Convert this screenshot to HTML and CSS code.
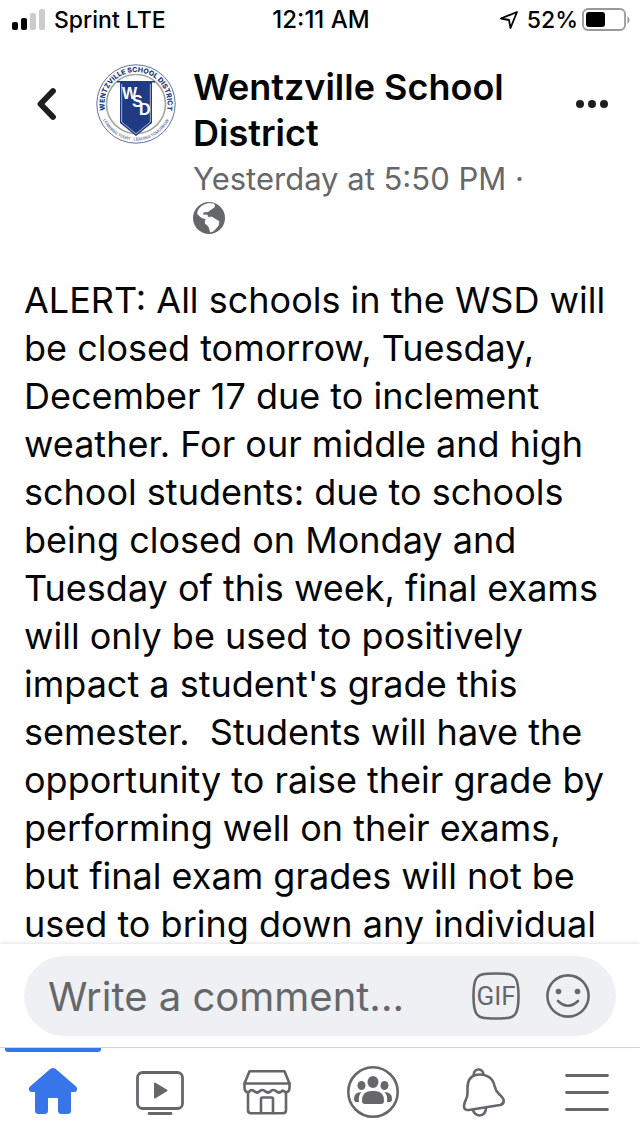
FILE: index.html
```html
<!DOCTYPE html>
<html lang="en">
<head>
<meta charset="utf-8">
<meta name="viewport" content="width=device-width, initial-scale=1">
<title>Wentzville School District</title>
<link rel="stylesheet" href="styles.css">
</head>
<body>
<div class="app">
  <div class="status">
    <div class="status-left">
      <svg width="34" height="22" viewBox="0 0 34 22" aria-hidden="true">
        <rect x="0" y="13" width="6" height="8" rx="2" fill="#000"/>
        <rect x="9" y="9" width="6" height="12" rx="2" fill="#000"/>
        <rect x="18" y="4" width="6" height="17" rx="2" fill="#ccc"/>
        <rect x="27" y="0" width="6" height="21" rx="2" fill="#ccc"/>
      </svg>
      <span>Sprint LTE</span>
    </div>
    <time class="status-time">12:11 AM</time>
    <div class="status-right">
      <svg class="location" width="20" height="20" viewBox="0 0 20 20" aria-hidden="true">
        <path d="M18 2 L2 8.500 L10 10 L11.500 18 Z" fill="none" stroke="#000" stroke-width="1.800" stroke-linejoin="round"/>
      </svg>
      <div class="battery-level">
        <span>52%</span>
        <svg width="48" height="24" viewBox="0 0 48 24" aria-hidden="true">
          <rect x="1" y="1" width="42" height="21" rx="5" fill="none" stroke="#999" stroke-width="1.800"/>
          <rect x="4" y="4" width="19" height="15" rx="3" fill="#000"/>
          <path d="M45.500 8 v8 q2-1.500 2-4 t-2-4z" fill="#999"/>
        </svg>
      </div>
    </div>
  </div>

  <header class="header">
    <button class="icon-button back" type="button" aria-label="Back">
      <svg width="22" height="34" viewBox="0 0 22 34"><path d="M17 4 L4.500 17 L17 30" fill="none" stroke="#1c1e22" stroke-width="5.800" stroke-linecap="round" stroke-linejoin="round"/></svg>
    </button>
    <svg class="avatar" width="80" height="80" viewBox="0 0 80 80" role="img" aria-label="Wentzville School District logo">
      <defs>
        <path id="ring-top" d="M12 54 A31.500 31.500 0 1 1 68 54"/>
        <path id="ring-bottom" d="M4 46 A36.500 36.500 0 0 0 76 46"/>
      </defs>
      <circle cx="40" cy="40" r="39.200" fill="#fff" stroke="#60719f" stroke-width="1"/>
      <circle cx="40" cy="40" r="29.500" fill="none" stroke="#a6a6a1" stroke-width="1.600"/>
      <text class="seal-name"><textPath href="#ring-top" startOffset="50%">WENTZVILLE SCHOOL DISTRICT</textPath></text>
      <text class="seal-motto"><textPath href="#ring-bottom" startOffset="50%">LEARNING TODAY &#160; LEADING TOMORROW</textPath></text>
      <path d="M21 17 H59 V18.500 H56 V59 L40 72 L24 59 V18.500 H21Z" fill="#203b83"/>
      <path d="M25.700 20 V58 L40 69.800 L54.300 58 V20" fill="none" stroke="#c8cfdf" stroke-width=".8"/>
      <text class="seal-letter" x="26" y="35">W</text>
      <text class="seal-letter" x="36" y="43">S</text>
      <text class="seal-letter" x="43" y="51">D</text>
    </svg>
    <div class="byline">
      <h1 class="author">Wentzville School District</h1>
      <div class="date">Yesterday at 5:50 PM ·</div>
      <svg class="globe" width="32" height="32" viewBox="0 0 32 32" role="img" aria-label="Public">
        <circle cx="16" cy="16" r="16" fill="#65676b"/>
        <path d="M21 2 L21.500 5 L17 8 L14 10.500 L10.500 10.500 L10 13 L14 12.500 L15 15.500 L18.500 15 L22 17 L26 19.500 L25 24 L20.500 29 L17.500 30 L16 25 L12 21 L13 17 L8.500 15.500 L4.500 12 Q5 5 12 2.500 Q16 .8 21 2Z" fill="#fff" stroke="#fff" stroke-width=".8" stroke-linejoin="round"/>
        <path d="M10.500 10.500 L14 10 L17 12 L16 14 L14 12.500 L10.500 12.500Z" fill="#65676b"/>
      </svg>
    </div>
    <button class="icon-button more" type="button" aria-label="More options">
      <svg width="34" height="10" viewBox="0 0 34 10" fill="#1c1e22"><circle cx="6" cy="5" r="4"/><circle cx="18" cy="5" r="4"/><circle cx="30" cy="5" r="4"/></svg>
    </button>
  </header>

  <main class="post">
    <p class="post-text">ALERT: All schools in the WSD will be closed tomorrow, Tuesday, December 17 due to inclement weather. For our middle and high school students: due to schools being closed on Monday and Tuesday of this week, final exams will only be used to positively impact a student's grade this semester.&nbsp; Students will have the opportunity to raise their grade by performing well on their exams, but final exam grades will not be used to bring down any individual</p>
  </main>

  <form class="composer">
    <div class="composer-pill">
      <input class="composer-input" type="text" placeholder="Write a comment..." aria-label="Write a comment">
      <button class="icon-button" type="button" aria-label="Add a GIF">
        <svg width="48" height="48" viewBox="0 0 48 48">
          <path d="M24 1.500 C37 1.500 40 2 43 5.500 C46 9 46.500 14 46.500 24 C46.500 34 46 39 43 42.500 C40 45.800 37 46.500 24 46.500 C11 46.500 8 45.800 5 42.500 C2 39 1.500 34 1.500 24 C1.500 14 2 9 5 5.500 C8 2 11 1.500 24 1.500Z" fill="none" stroke="#65676b" stroke-width="2.600"/>
          <text class="gif-label" x="24" y="33">GIF</text>
        </svg>
      </button>
      <button class="icon-button" type="button" aria-label="Add an emoji">
        <svg width="44" height="44" viewBox="0 0 44 44">
          <circle cx="22" cy="22" r="20.600" fill="none" stroke="#65676b" stroke-width="2.600"/>
          <circle cx="12.500" cy="17.500" r="2.800" fill="#65676b"/><circle cx="31.500" cy="17.500" r="2.800" fill="#65676b"/>
          <path d="M12 27 Q22 36.500 32 27" fill="none" stroke="#65676b" stroke-width="2.600" stroke-linecap="round"/>
        </svg>
      </button>
    </div>
  </form>

  <nav class="tabs" aria-label="Main">
    <a class="tab tab-active" href="#home" aria-label="Home" aria-current="page">
      <svg width="52" height="52" viewBox="0 1 52 52"><path d="M23.500 3.800 Q26 2 28.500 3.800 L49 21.500 Q51 23.500 49.500 26 Q49 27 47 27 H44 V45.500 Q44 49 40.500 49 H34.500 Q31 49 31 45.500 V33 H21 V45.500 Q21 49 17.500 49 H11.500 Q8 49 8 45.500 V27 H5 Q3 27 2.500 26 Q1 23.500 3 21.500Z" fill="#3875ea"/></svg>
    </a>
    <a class="tab" href="#watch" aria-label="Watch">
      <svg width="52" height="52" viewBox="0 0 52 52" fill="none" stroke="#65676b" stroke-width="2.800" stroke-linecap="round">
        <rect x="3.500" y="6.500" width="45" height="36" rx="5"/><path d="M15 47.500 H37"/>
        <path d="M21 17.500 L32.500 24.500 L21 31.500Z" fill="#65676b" stroke-width="2" stroke-linejoin="round"/>
      </svg>
    </a>
    <a class="tab" href="#marketplace" aria-label="Marketplace">
      <svg width="52" height="52" viewBox="0 0 52 52" fill="none" stroke="#65676b" stroke-width="2.600" stroke-linecap="round" stroke-linejoin="round">
        <path d="M8.500 5.300 H43.500 L48.500 17.500 H3.500Z"/>
        <path d="M3.500 17.500 V22 Q4 27 8 26 Q10 23 13 25 Q16 28 19 25 Q21 23 24 25 Q27 28 30 25 Q32 23 35 25 Q38 28 41 25 Q42 24 44 26 Q48 27 48.500 22 V17.500"/>
        <path d="M7 26 V44 Q7 47.300 10 47.300 H42 Q45 47.300 45 44 V26"/><path d="M20 47 V33 Q20 31.500 21.500 31.500 H30.500 Q32 31.500 32 33 V47"/>
      </svg>
    </a>
    <a class="tab" href="#groups" aria-label="Groups">
      <svg width="52" height="52" viewBox="0 0 52 52" fill="#65676b">
        <circle cx="26" cy="26" r="24.700" fill="none" stroke="#65676b" stroke-width="2.600"/>
        <ellipse cx="26" cy="16" rx="5.500" ry="6"/><ellipse cx="14.500" cy="19.500" rx="4" ry="4.500"/><ellipse cx="37.500" cy="19.500" rx="4" ry="4.500"/>
        <path d="M15 35 Q15 25 24 25 H28 Q37 25 37 35 Q37 38 34 38 H18 Q15 38 15 35Z"/>
        <path d="M14.500 26 Q7 26 7 33 Q7 36 9 36 H12 Q11 29.500 14.500 26Z M37.500 26 Q45 26 45 33 Q45 36 43 36 H40 Q41 29.500 37.500 26Z"/>
      </svg>
    </a>
    <a class="tab" href="#notifications" aria-label="Notifications">
      <svg width="52" height="52" viewBox="2 0 52 52" fill="none" stroke="#65676b" stroke-width="2.600" stroke-linejoin="round">
        <path d="M21.500 9.500 Q22 3.500 26.500 3.500 Q30.500 3.500 31.500 8"/>
        <path d="M15.500 24 C15 15 18 10 25 8.800 C33 7.500 40 11 42 18 C43 22 43 24 47 28 Q50.500 31 51.500 33.500 Q52.500 38 48 39 L17 44 Q12 44.500 12 40 Q12 37 14 33.500 Q15.800 30 15.500 24Z"/>
        <path d="M20.500 43.500 Q23 49.500 27.500 49.500 Q34 49 34 41.500"/>
      </svg>
    </a>
    <a class="tab" href="#menu" aria-label="Menu">
      <svg width="52" height="52" viewBox="0 0 52 52" stroke="#65676b" stroke-width="2.800" stroke-linecap="round"><path d="M5.500 9.500 H46.500 M5.500 26.500 H46.500 M5.500 43.500 H46.500"/></svg>
    </a>
  </nav>
</div>
</body>
</html>
```
FILE: styles.css
```css
* {
  box-sizing: border-box;
}

body {
  margin: 0;
  background: #fff;
  color: #050505;
  font-family: Inter, "Liberation Sans", sans-serif;
}

svg {
  display: block;
  flex-shrink: 0;
}

.app {
  display: flex;
  flex-direction: column;
  height: 100vh;
  overflow: hidden;
}

.status {
  display: grid;
  grid-template-columns: 1fr auto 1fr;
  align-items: center;
  height: 40px;
  padding: 0 10px 0 12px;
  font-size: 23px;
  font-weight: 500;
  line-height: 28px;
  color: #000;
}

.status-time {
  font-size: 24px;
}

.status-left,
.status-right {
  display: flex;
  align-items: center;
  gap: 8px;
}

.status-right {
  justify-content: flex-end;
}

.battery-level {
  display: flex;
  align-items: center;
  gap: 4px;
}

.header {
  display: flex;
  align-items: flex-start;
  padding: 24px 32px 0 36px;
}

.icon-button {
  display: flex;
  align-items: center;
  justify-content: center;
  flex-shrink: 0;
  padding: 0;
  border: 0;
  background: none;
}

.back,
.more {
  height: 80px;
}

.avatar {
  margin-left: 38px;
}

.seal-name {
  font: 800 7px Inter, sans-serif;
  fill: #203b83;
  text-anchor: middle;
}

.seal-motto {
  font: 600 4px Inter, sans-serif;
  fill: #60719f;
  text-anchor: middle;
}

.seal-letter {
  font: 700 16px "Liberation Sans", sans-serif;
  fill: #fff;
}

.byline {
  flex: 1;
  min-width: 0;
  margin-left: 17px;
}

.author {
  max-width: 360px;
  margin: 0;
  font-size: 36px;
  font-weight: 600;
  line-height: 46px;
}

.date {
  font-size: 31px;
  line-height: 46px;
  color: #65676b;
}

.post {
  flex: 1;
  min-height: 0;
  overflow: hidden;
  padding: 42px 24px 0;
}

.post-text {
  margin: 0;
  font-size: 36px;
  line-height: 48px;
}

.composer {
  padding: 12px 24px 11px;
  box-shadow: 0 -1px 4px rgba(0, 0, 0, 0.12);
}

.composer-pill {
  display: flex;
  align-items: center;
  gap: 26px;
  height: 80px;
  padding: 0 26px 0 24px;
  border-radius: 40px;
  background: #eff0f4;
}

.composer-input {
  flex: 1;
  min-width: 0;
  padding: 0;
  border: 0;
  outline: 0;
  background: none;
  color: #050505;
  font: 400 40px Inter, "Liberation Sans", sans-serif;
}

.composer-input::placeholder {
  color: #65676b;
  opacity: 1;
}

.gif-label {
  font: 400 26px Roboto, sans-serif;
  fill: #65676b;
  text-anchor: middle;
}

.tabs {
  display: grid;
  grid-template-columns: repeat(6, 1fr);
  height: 89px;
  border-top: 1px solid #d2d3d5;
}

.tab {
  position: relative;
  display: flex;
  align-items: center;
  justify-content: center;
}

.tab-active::before {
  content: "";
  position: absolute;
  top: 0;
  left: 5px;
  right: 6px;
  height: 4px;
  border-radius: 0 0 3px 3px;
  background: #3875ea;
}
```
